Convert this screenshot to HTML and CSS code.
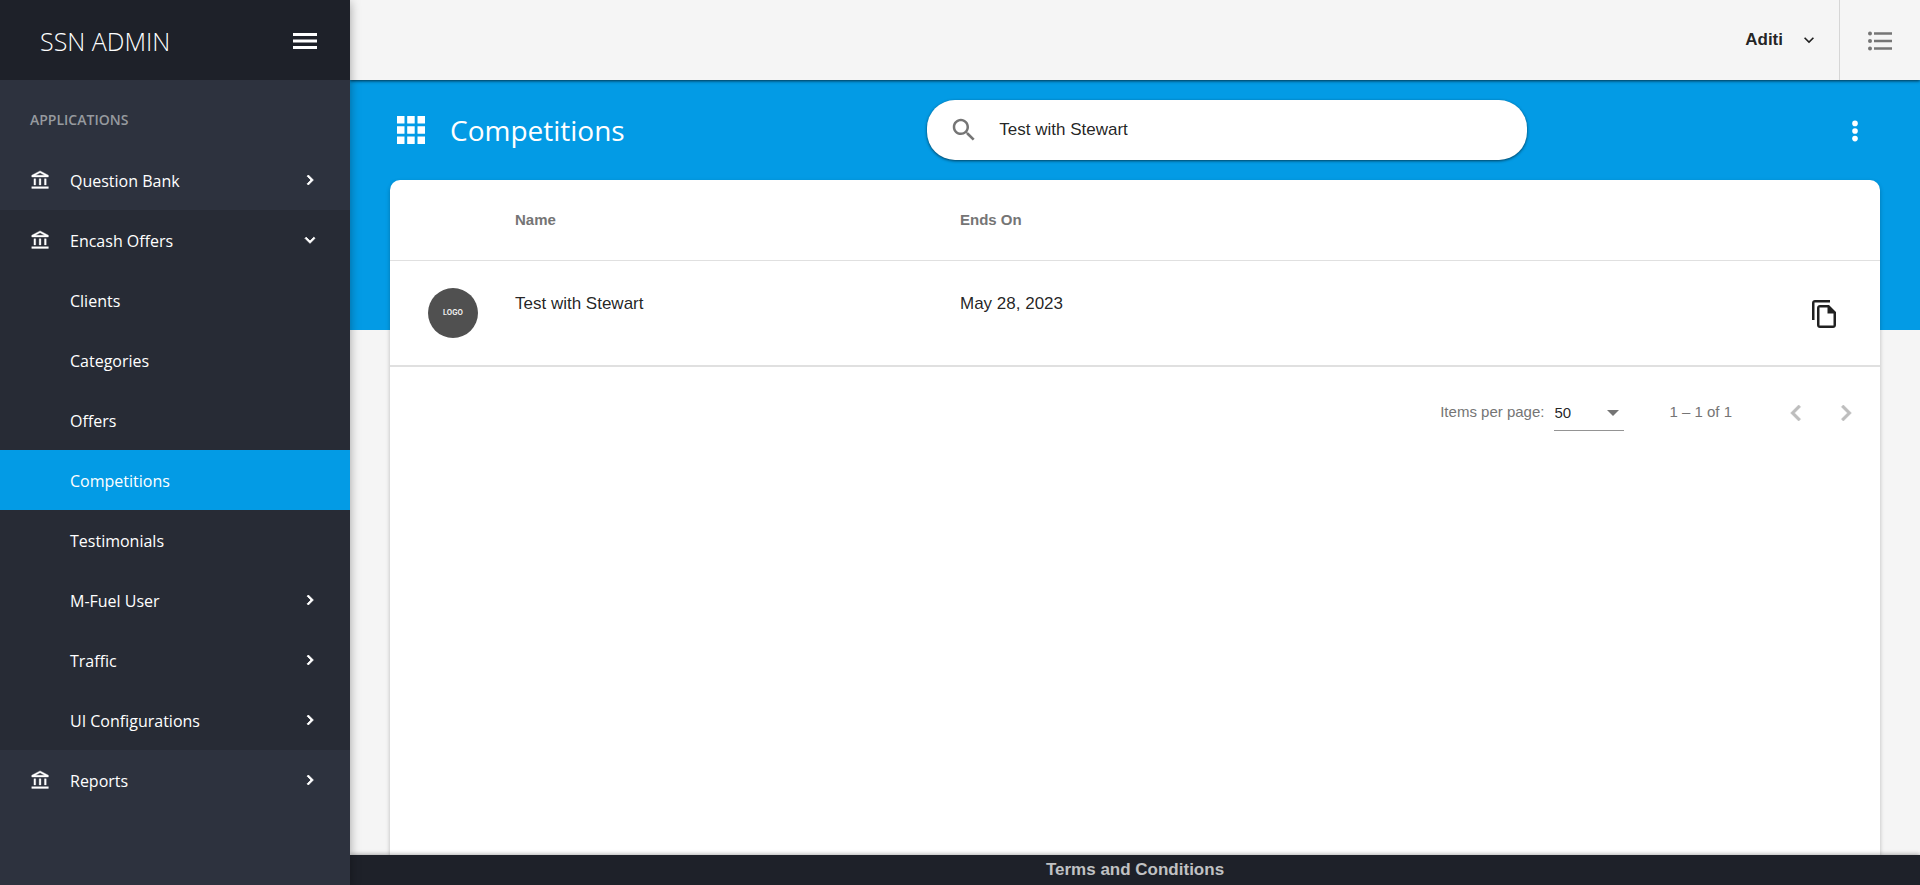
FILE: index.html
```html
<!DOCTYPE html>
<html lang="en">
<head>
<meta charset="utf-8">
<title>SSN Admin - Competitions</title>
<link rel="stylesheet" href="styles.css">
</head>
<body>
<svg class="sprite" aria-hidden="true">
  <symbol id="bank" viewBox="0 0 24 24"><path d="M6.5 10h-2v7h2v-7zm6 0h-2v7h2v-7zm8.500 9H2v2h19v-2zm-2.500-9h-2v7h2v-7zm-7-6.740L16.710 6H6.290l5.210-2.740m0-2.260L2 6v2h19V6l-9.500-5z"/></symbol>
  <symbol id="right" viewBox="0 0 24 24"><path d="M10 6 8.590 7.410 13.170 12l-4.580 4.590L10 18l6-6z"/></symbol>
  <symbol id="left" viewBox="0 0 24 24"><path d="M15.410 7.410 14 6l-6 6 6 6 1.410-1.410L10.830 12z"/></symbol>
  <symbol id="down" viewBox="0 0 24 24"><path d="M16.590 8.590 12 13.170 7.410 8.590 6 10l6 6 6-6z"/></symbol>
</svg>
<div class="app">
  <aside class="sidebar">
    <div class="brand">
      <span class="brand-name">SSN ADMIN</span>
      <button class="icon-button" aria-label="Toggle menu"><svg class="icon menu-icon" viewBox="0 0 24 24"><path d="M0 4h24v3H0zM0 10.500h24v3H0zM0 17h24v3H0z"/></svg></button>
    </div>
    <nav class="nav" aria-label="Applications">
      <h2 class="nav-heading">APPLICATIONS</h2>
      <button class="nav-item"><svg class="icon bank"><use href="#bank"/></svg><span class="nav-label">Question Bank</span><svg class="icon arrow"><use href="#right"/></svg></button>
      <div class="nav-group">
        <button class="nav-item" aria-expanded="true"><svg class="icon bank"><use href="#bank"/></svg><span class="nav-label">Encash Offers</span><svg class="icon arrow"><use href="#down"/></svg></button>
        <a class="nav-item child" href="#clients"><span class="nav-label">Clients</span></a>
        <a class="nav-item child" href="#categories"><span class="nav-label">Categories</span></a>
        <a class="nav-item child" href="#offers"><span class="nav-label">Offers</span></a>
        <a class="nav-item child active" href="#competitions" aria-current="page"><span class="nav-label">Competitions</span></a>
        <a class="nav-item child" href="#testimonials"><span class="nav-label">Testimonials</span></a>
        <button class="nav-item child"><span class="nav-label">M-Fuel User</span><svg class="icon arrow"><use href="#right"/></svg></button>
        <button class="nav-item child"><span class="nav-label">Traffic</span><svg class="icon arrow"><use href="#right"/></svg></button>
        <button class="nav-item child"><span class="nav-label">UI Configurations</span><svg class="icon arrow"><use href="#right"/></svg></button>
      </div>
      <button class="nav-item"><svg class="icon bank"><use href="#bank"/></svg><span class="nav-label">Reports</span><svg class="icon arrow"><use href="#right"/></svg></button>
    </nav>
  </aside>
  <div class="content">
    <header class="toolbar">
      <button class="user">Aditi<svg class="icon user-arrow"><use href="#down"/></svg></button>
      <button class="panel-toggle" aria-label="Quick panel"><svg class="icon list-icon" viewBox="0 0 24 20"><circle cx="2" cy="2.500" r="2"/><circle cx="2" cy="10" r="2"/><circle cx="2" cy="17.500" r="2"/><path d="M6 1.200h18v2.600H6zM6 8.700h18v2.600H6zM6 16.200h18v2.600H6z"/></svg></button>
    </header>
    <main class="page">
      <div class="page-header">
        <div class="page-title">
          <svg class="icon apps-icon" viewBox="0 0 28 28"><path d="M0 0h7.500v7.500H0zM10.200 0h7.500v7.500h-7.500zM20.500 0H28v7.500h-7.500zM0 10.200h7.500v7.500H0zM10.200 10.200h7.500v7.500h-7.500zM20.500 10.200H28v7.500h-7.500zM0 20.500h7.500V28H0zM10.200 20.500h7.500V28h-7.500zM20.500 20.500H28V28h-7.500z"/></svg>
          <h1>Competitions</h1>
        </div>
        <label class="search">
          <svg class="icon search-icon" viewBox="0 0 24 24"><path d="M15.500 14h-.79l-.28-.27C15.410 12.590 16 11.110 16 9.500 16 5.910 13.090 3 9.500 3S3 5.910 3 9.500 5.910 16 9.500 16c1.610 0 3.090-.59 4.230-1.570l.27.28v.79l5 4.990L20.490 19l-4.990-5zm-6 0C7.010 14 5 11.990 5 9.500S7.010 5 9.500 5 14 7.010 14 9.500 11.990 14 9.500 14z"/></svg>
          <input type="text" value="Test with Stewart" aria-label="Search">
        </label>
        <button class="icon-button more" aria-label="More options"><svg class="icon more-icon" viewBox="0 0 24 24"><circle cx="12" cy="5" r="2.600"/><circle cx="12" cy="12" r="2.600"/><circle cx="12" cy="19" r="2.600"/></svg></button>
      </div>
      <section class="card">
        <table class="table">
          <thead><tr><th></th><th>Name</th><th>Ends On</th><th></th></tr></thead>
          <tbody><tr>
            <td class="logo-cell"><span class="logo">LOGO</span></td>
            <td>Test with Stewart</td>
            <td>May 28, 2023</td>
            <td class="action-cell"><button class="icon-button" aria-label="Copy"><svg class="icon copy-icon" viewBox="0 0 24 28"><path fill-rule="evenodd" d="M3 0h15v2.500H2.500V20H0V3C0 1.300 1.300 0 3 0zM8 5h9l7 7v13c0 1.700-1.300 3-3 3H8c-1.700 0-3-1.300-3-3V8c0-1.700 1.300-3 3-3zm-.5 2.500v18h14V13.500H15.500v-6z"/></svg></button></td>
          </tr></tbody>
        </table>
        <div class="paginator">
          <label class="caption" for="page-size">Items per page:</label>
          <span class="select">
            <select id="page-size"><option>50</option></select>
            <svg class="select-arrow" viewBox="0 0 12 6"><path d="M0 0h12L6 6z"/></svg>
          </span>
          <span class="caption">1 – 1 of 1</span>
          <div class="pager">
            <button class="icon-button" disabled aria-label="Previous page"><svg class="icon page-arrow"><use href="#left"/></svg></button>
            <button class="icon-button" disabled aria-label="Next page"><svg class="icon page-arrow"><use href="#right"/></svg></button>
          </div>
        </div>
      </section>
    </main>
    <footer class="footer"><a href="#terms">Terms and Conditions</a></footer>
  </div>
</div>
</body>
</html>
```
FILE: styles.css
```css
* { box-sizing: border-box; }

body {
  margin: 0;
  background: #f5f5f5;
  color: rgba(0, 0, 0, 0.87);
  font: 17px/20px "Liberation Sans", Arial, sans-serif;
}

button, input, select { font: inherit; color: inherit; }
button { background: none; border: 0; padding: 0; cursor: pointer; }
a { color: inherit; text-decoration: none; }

.sprite { display: none; }
.icon { display: block; flex: none; fill: currentColor; }
.icon-button { display: flex; align-items: center; justify-content: center; }

.app { display: flex; height: 100vh; }

/* Sidebar */
.sidebar {
  z-index: 2;
  flex: none;
  width: 350px;
  overflow: auto;
  background: #2d323e;
  color: #fff;
  font-family: "Open Sans", "Noto Sans", sans-serif;
  box-shadow: 0 2px 10px rgba(0, 0, 0, 0.35);
}

.brand {
  display: flex;
  align-items: center;
  justify-content: space-between;
  height: 80px;
  padding: 2px 32px 0 40px;
  background: #1e2129;
}
.brand-name { font-size: 25px; font-weight: 300; }
.menu-icon { width: 26px; height: 24px; }

.nav-heading {
  margin: 0;
  padding: 0 30px;
  color: #969a9f;
  font-size: 14px;
  font-weight: 600;
  line-height: 80px;
  height: 70px;
}
.nav-item {
  display: flex;
  align-items: center;
  width: 100%;
  height: 60px;
  padding: 0 30px;
  font-size: 16px;
  text-align: left;
}
.nav-label { flex: 1; padding-top: 2px; }
.bank { width: 21px; height: 21px; margin-right: 19px; stroke: currentColor; stroke-width: 0.4px; }
.arrow { width: 20px; height: 20px; stroke: currentColor; }
.child { padding-left: 70px; }
.nav-group { background: #272b35; }
.active { background: #039be5; }

/* Content column */
.content { display: flex; flex: 1; flex-direction: column; min-width: 0; }

.toolbar {
  z-index: 1;
  display: flex;
  flex: none;
  justify-content: flex-end;
  height: 80px;
  background: #f5f5f5;
  box-shadow: 0 1px 3px rgba(0, 0, 0, 0.7);
}
.user { display: flex; align-items: center; gap: 16px; padding: 0 20px; font-weight: 700; }
.user-arrow { width: 20px; height: 20px; }
.panel-toggle {
  display: grid;
  place-items: center;
  width: 81px;
  padding-top: 2px;
  border-left: 1px solid #d6d6d6;
  color: #757575;
}
.list-icon { width: 24px; height: 20px; }

.page {
  display: flex;
  flex: 1;
  flex-direction: column;
  min-height: 0;
  padding: 0 40px;
  background: linear-gradient(#039be5, #039be5) top / 100% 250px no-repeat;
}
.page-header {
  display: flex;
  justify-content: space-between;
  align-items: center;
  flex: none;
  height: 100px;
  color: #fff;
}
.page-title { display: flex; align-items: center; gap: 25px; padding-left: 7px; }
.page-title h1 { margin: 0; font: 400 28px/40px "Open Sans", "Noto Sans", sans-serif; }
.apps-icon { width: 28px; height: 28px; }
.more { width: 50px; height: 50px; padding-top: 2px; }
.more-icon { width: 26px; height: 26px; }

.search {
  display: flex;
  align-items: center;
  flex: 0 1 600px;
  gap: 20px;
  height: 60px;
  padding: 0 22px;
  border-radius: 28px;
  background: #fff;
  color: rgba(0, 0, 0, 0.87);
  box-shadow: 0 1px 3px rgba(0, 0, 0, 0.6);
}
.search-icon { width: 30px; height: 30px; fill: #757575; }
.search input { flex: 1; min-width: 0; padding: 0; border: 0; outline: 0; background: none; }

.card {
  flex: 1;
  min-height: 0;
  overflow: auto;
  border-radius: 10px 10px 0 0;
  background: #fff;
  box-shadow: 0 2px 4px rgba(0, 0, 0, 0.25);
}

.table, .table thead, .table tbody { display: block; }
.table tr {
  display: grid;
  grid-template-columns: 125px 1fr 1fr 1fr;
  align-items: center;
  padding-right: 30px;
  border-bottom: 1px solid #e0e0e0;
}
.table th, .table td { padding: 0; text-align: left; }
.table thead tr { height: 81px; }
.table th { color: #757575; font-size: 15px; }
.table tbody tr { height: 106px; border-bottom-width: 2px; }
.table tbody td { padding-bottom: 18px; }
.table tbody .logo-cell { padding: 0 0 0 38px; }
.table tbody .action-cell { display: flex; justify-content: flex-end; padding: 2px 14px 0 0; }
.logo {
  display: grid;
  place-items: center;
  width: 50px;
  height: 50px;
  border-radius: 50%;
  background: #505050;
  color: #eee;
  font: 700 7px/8px Inter, sans-serif;
}
.copy-icon { width: 24px; height: 28px; }

.paginator {
  display: flex;
  align-items: center;
  justify-content: flex-end;
  padding: 26px 9px 0 0;
  color: #757575;
  font-size: 15px;
}
.caption { padding-bottom: 2px; }
.select {
  display: grid;
  align-items: center;
  width: 70px;
  margin: 0 45px 0 10px;
  border-bottom: 1px solid #949494;
}
.select select {
  grid-area: 1 / 1;
  width: 100%;
  height: 34px;
  padding: 0;
  border: 0;
  outline: 0;
  appearance: none;
  background: none;
  color: rgba(0, 0, 0, 0.87);
}
.select-arrow { grid-area: 1 / 1; justify-self: end; width: 12px; height: 6px; margin-right: 5px; fill: #757575; pointer-events: none; }
.pager { display: flex; margin-left: 39px; }
.pager .icon-button { width: 50px; height: 40px; color: #bdbdbd; }
.page-arrow { width: 32px; height: 32px; stroke: currentColor; stroke-width: 0.5px; }

.footer {
  z-index: 1;
  flex: none;
  height: 30px;
  background: #1e2129;
  color: #c0c1c3;
  font-weight: 700;
  line-height: 30px;
  text-align: center;
  box-shadow: 0 -1px 4px rgba(0, 0, 0, 0.3);
}
```
